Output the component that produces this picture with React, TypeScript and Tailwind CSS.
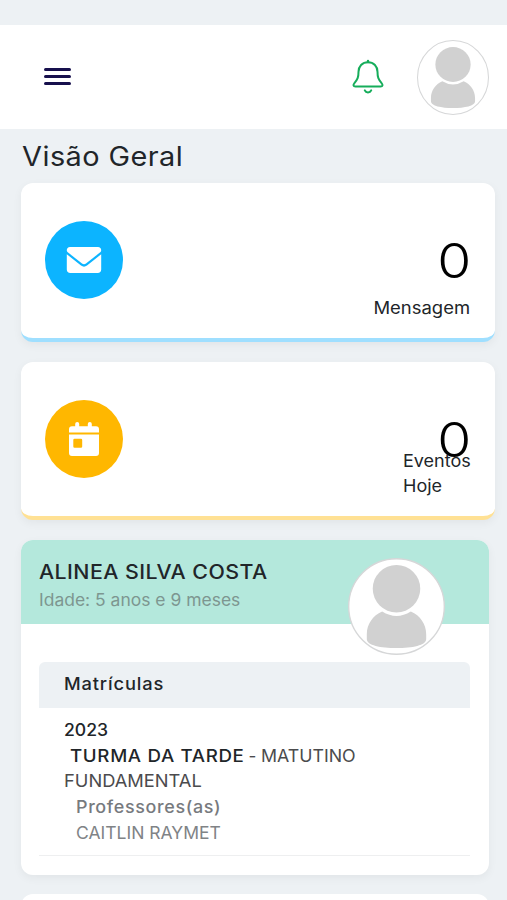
import type { ReactNode } from "react";

function Person({ className, inset = false }: { className: string; inset?: boolean }) {
  return (
    <svg viewBox="0 0 98 98" className={className} aria-hidden="true" preserveAspectRatio="none">
      <ellipse cx="49" cy="49" rx="48.3" ry="48.3" fill="#fff" stroke="#d6d7d8" strokeWidth="1.4" />
      <g fill="#d1d1d1" transform={inset ? "translate(0 2.6) scale(1 .949)" : undefined}>
        <circle cx="49" cy="31" r="24" />
        <path d="M34.5 54 Q49 63 63.5 54 C73 58 79 67 79 77 V82 C79 88 65 91 49 91 S19 88 19 82 V77 C19 67 25 58 34.5 54Z" />
      </g>
    </svg>
  );
}

function Bell() {
  return (
    <svg width="32" height="36" viewBox="0 0 32 36" fill="none" stroke="#16ad5b" strokeWidth="2" strokeLinecap="round" strokeLinejoin="round" aria-hidden="true">
      <path d="M16 2 V3" strokeWidth="2.4" />
      <path d="M16 3.2 C10.2 3.2 6.5 7.3 6.5 12.8 C6.5 18.5 5.5 20.4 2.6 23.8 C0.7 26 1.4 27.6 3.4 27.6 H28.6 C30.6 27.6 31.3 26 29.4 23.8 C26.5 20.4 25.5 18.5 25.5 12.8 C25.5 7.3 21.8 3.2 16 3.2Z" />
      <path d="M12.8 31.4 C14 34.1 18 34.1 19.2 31.4" />
    </svg>
  );
}

function Envelope() {
  return (
    <svg className="-mt-px -ml-px" width="36" height="28" viewBox="0 0 36 28" fill="#fff" aria-hidden="true">
      <path d="M4 1 H32 C34 1 35.2 2.3 35.2 4.2 C35.2 5.2 34.6 6 33.6 6.8 L20 17.4 C18.7 18.4 17.3 18.4 16 17.4 L2.4 6.8 C1.4 6 .8 5.2 .8 4.2 C.8 2.3 2 1 4 1Z" />
      <path d="M.8 8.3 L15 19.5 C17 21 19 21 21 19.5 L35.2 8.3 V23.5 C35.2 25.7 33.9 27 31.7 27 H4.3 C2.1 27 .8 25.7 .8 23.5Z" />
    </svg>
  );
}

function Calendar() {
  return (
    <svg width="32" height="36" viewBox="0 0 32 36" fill="#fff" aria-hidden="true">
      <path d="M4 5.2 H7.2 V3 Q7.2 1 9.2 1 T11.2 3 V5.2 H19.8 V3 Q19.8 1 21.8 1 T23.8 3 V5.2 H28 Q31 5.2 31 8.2 V11.5 H1 V8.2 Q1 5.2 4 5.2Z" />
      <path fillRule="evenodd" d="M1 13.6 H31 V32 Q31 35 28 35 H4 Q1 35 1 32Z M6.5 17.8 Q5.3 17.8 5.3 19 V25.5 Q5.3 26.7 6.5 26.7 H13 Q14.2 26.7 14.2 25.5 V19 Q14.2 17.8 13 17.8Z" />
    </svg>
  );
}

function StatCard({ border, circle, icon, children }: { border: string; circle: string; icon: ReactNode; children: ReactNode }) {
  return (
    <section className={`flex h-[158.5px] w-[474px] justify-between rounded-xl border-b-4 bg-white pr-[25px] pl-6 shadow-[0_3px_10px_rgba(0,0,0,0.05)] ${border}`}>
      <div className={`mt-[38px] flex size-[78px] items-center justify-center rounded-full ${circle}`}>{icon}</div>
      <div className="flex flex-col items-end pt-[52px]">
        <span className="-mr-px block h-[50px] origin-right scale-x-[1.16] text-[47.5px] leading-[51px] font-light text-black">0</span>
        {children}
      </div>
    </section>
  );
}

export default function App() {
  return (
    <div className="h-[900px] w-[507px] overflow-hidden bg-[#edf1f4] pt-[25px] font-['Inter',sans-serif] text-[17px] leading-[25.7px] text-[#212529]">
      <header className="flex h-[104px] items-center bg-white pr-[18px] pl-[44px]">
        <button aria-label="Menu" className="mt-[-1px] flex w-[27px] flex-col gap-1">
          <span className="h-[3px] rounded-full bg-[#17104d]" />
          <span className="h-[3px] rounded-full bg-[#17104d]" />
          <span className="h-[3px] rounded-full bg-[#17104d]" />
        </button>
        <div className="ml-auto flex items-center gap-[33px]">
          <Bell />
          <Person inset className="h-[75px] w-[72px]" />
        </div>
      </header>

      <main className="pl-[21px]">
        <h1 className="h-[54px] origin-left scale-x-[1.09] pt-[9px] pl-px text-[26.5px] leading-9 tracking-[0.4px]">Visão Geral</h1>

        <StatCard border="border-[#9fdfff]" circle="bg-[#0cb4ff]" icon={<Envelope />}>
          <span className="mt-[11px] origin-right scale-x-[1.085]">Mensagem</span>
        </StatCard>
        <div className="h-5" />
        <StatCard border="border-[#ffe194]" circle="bg-[#ffb700]" icon={<Calendar />}>
          <span className="-mt-[15px] w-[67px] origin-left scale-x-[1.06]">Eventos Hoje</span>
        </StatCard>

        <article className="mt-5 h-[335px] w-[468px] rounded-xl bg-white shadow-[0_3px_10px_rgba(0,0,0,0.05)]">
          <div className="flex h-[84px] justify-between rounded-t-xl bg-[#b4e8dc] pr-[44px] pl-[18px]">
            <div className="pt-[18px]">
              <h2 className="w-fit origin-left scale-x-[1.096] text-[19.5px] leading-[28px] font-medium tracking-[0.4px] whitespace-nowrap">ALINEA SILVA COSTA</h2>
              <p className="w-fit origin-left scale-x-[1.028] leading-[28px] whitespace-nowrap text-[#7d9690]">Idade: 5 anos e 9 meses</p>
            </div>
            <Person className="mt-[18px] size-[97px] shrink-0" />
          </div>
          <div className="px-[18px] pt-[38px] pr-[19px]">
            <h3 className="h-[46px] rounded-t-md bg-[#edf1f4] pt-[9.5px] pl-[25px]">
              <span className="inline-block origin-left scale-x-[1.075] font-medium tracking-[0.8px]">Matrículas</span>
            </h3>
            <div className="h-[148px] border-b border-[#eeeff0] pt-[10px] pl-[24.5px]">
              <p className="w-fit origin-left scale-x-[1.035] font-medium">2023</p>
              <p className="flex pl-[6px] whitespace-nowrap">
                <span className="w-[175px]">
                  <span className="inline-block origin-left scale-x-[1.1] font-medium tracking-[0.6px]">TURMA DA TARDE</span>
                </span>
                <span className="w-[16px] text-center text-[#4b4b4d]">-</span>
                <span className="origin-left scale-x-[1.045] text-[#4b4b4d]">MATUTINO</span>
              </p>
              <p className="w-fit origin-left scale-x-[1.075] text-[#4b4b4d]">FUNDAMENTAL</p>
              <p className="ml-3 w-fit origin-left scale-x-[1.055] font-medium tracking-[0.6px] text-[#777a7e]">Professores(as)</p>
              <p className="ml-3 w-fit origin-left scale-x-[1.03] text-[#808386]">CAITLIN RAYMET</p>
            </div>
          </div>
        </article>
        <article className="mt-[19px] h-[40px] w-[468px] rounded-xl bg-white" />
      </main>
    </div>
  );
}
